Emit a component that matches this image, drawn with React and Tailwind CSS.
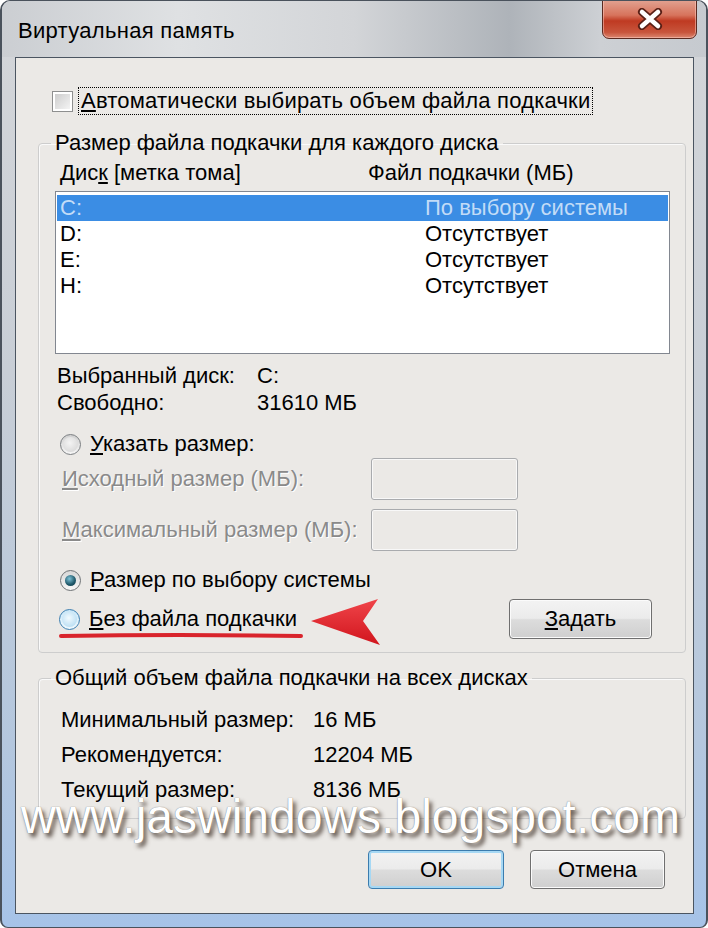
import React from 'react';

const font = "font-['Liberation_Sans',Arial,sans-serif]";

const Radio = ({ state }) => {
  if (state === 'checked') {
    return (
      <span className="w-[21px] h-[21px] rounded-full border border-[#6f7376] bg-[linear-gradient(to_bottom,#d8d8d8,#f7f7f7)] flex items-center justify-center shrink-0">
        <span className="w-[11px] h-[11px] rounded-full bg-[radial-gradient(circle_at_40%_35%,#7fc3d8,#1d5668_60%,#123b48)]" />
      </span>
    );
  }
  if (state === 'hover') {
    return (
      <span className="w-[21px] h-[21px] rounded-full border border-[#3c7fb1] bg-[linear-gradient(to_bottom,#c9e6f7,#eef8fd)] flex items-center justify-center shrink-0">
        <span className="w-[15px] h-[15px] rounded-full bg-[radial-gradient(circle_at_45%_40%,#f2fafe,#a9d6f0)]" />
      </span>
    );
  }
  return (
    <span className="w-[21px] h-[21px] rounded-full border border-[#7b7f82] bg-[linear-gradient(to_bottom,#cfcfcf,#f6f6f6)] flex items-center justify-center shrink-0">
      <span className="w-[15px] h-[15px] rounded-full bg-[radial-gradient(circle_at_45%_40%,#f4f4f4,#d2d2d2)]" />
    </span>
  );
};

const WinButton = ({ children, focused, className = '' }) => (
  <div
    className={`flex items-center justify-center rounded-[4px] border text-[22px] leading-none text-black bg-[linear-gradient(to_bottom,#f3f3f3_0%,#ebebeb_48%,#dcdcdc_52%,#cfcfcf_100%)] ${
      focused
        ? 'border-[#3b7cae] shadow-[inset_0_0_0_2px_#a6d8f4]'
        : 'border-[#6f6f6f] shadow-[inset_0_0_0_1px_#fbfbfb]'
    } ${className}`}
  >
    {children}
  </div>
);

const Disk = ({ name, value, selected }) => (
  <div
    className={`flex items-center h-[26px] text-[22px] leading-none ${
      selected ? 'bg-[#3b8de4] text-[#c2dcf7]' : 'text-black'
    }`}
  >
    <span className="w-[368px] pl-[3px]">{name}</span>
    <span>{value}</span>
  </div>
);

export default function App() {
  return (
    <div
      className={`relative w-[708px] h-[928px] overflow-hidden ${font} rounded-t-[10px] rounded-b-[8px] border-x-2 border-y border-[#4a525c] bg-[linear-gradient(to_bottom,#d4d6d9_0%,#c8ced6_40%,#b4c7de_80%,#a6c3e8_100%)]`}
    >
      {/* title bar */}
      <div className="flex h-[56px] pl-[16px] pr-[9px] bg-[linear-gradient(to_right,#cbced2_0%,#dfe1e3_25%,#d3d5d8_50%,#aeb3b9_72%,#cdd0d4_85%,#c6cacf_100%)]">
        <div className="flex-1 pt-[19px] text-[22px] leading-none tracking-[0.3px] text-black">Виртуальная память</div>
        <div className="-mt-[2px] w-[95px] h-[40px] rounded-b-[7px] border border-[#5b2a20] bg-[linear-gradient(to_bottom,#e2a392_0%,#d7735c_40%,#bf3a22_55%,#c8553c_85%,#dc8770_100%)] shadow-[inset_0_0_0_1px_rgba(255,210,200,0.5)] flex items-center justify-center">
          <svg width="28" height="22" viewBox="0 0 28 22">
            <path d="M6 4 L22 18 M22 4 L6 18" stroke="#5a2016" strokeWidth="8" strokeLinecap="round" />
            <path d="M6 4 L22 18 M22 4 L6 18" stroke="#ffffff" strokeWidth="4.5" strokeLinecap="round" />
          </svg>
        </div>
      </div>

      {/* client area */}
      <div className="ml-[13px] w-[679px] h-[857px] border border-[#4b5561] bg-[#ebe9e6] text-black">
        {/* auto checkbox */}
        <div className="mt-[29px] ml-[36px] flex items-center h-[28px]">
          <span className="w-[21px] h-[21px] border border-[#8e8f8f] bg-white p-[2px] shrink-0">
            <span className="block w-full h-full bg-[linear-gradient(135deg,#cdcdcd,#f4f4f4)]" />
          </span>
          <span className="ml-[5px] h-[28px] flex items-center px-[2px] border border-dotted border-black text-[22px] leading-none tracking-[0.2px]">
            <u className="underline-offset-2">А</u>втоматически выбирать объем файла подкачки
          </span>
        </div>

        {/* per-disk group */}
        <fieldset className="mt-[15px] ml-[22px] w-[648px] border border-[#cdcdcd] rounded-[4px] pb-[13px] shadow-[inset_1px_1px_0_#fafafa]">
          <legend className="ml-[12px] px-[4px] h-[26px] flex items-center text-[22px] leading-none">
            Размер файла подкачки для каждого диска
          </legend>
          <div className="mt-[5px] h-[24px] flex items-center text-[22px] leading-none">
            <span className="pl-[21px] w-[329px]">
              Дис<u className="underline-offset-2">к</u> [метка тома]
            </span>
            <span>Файл подкачки (МБ)</span>
          </div>
          <div className="mt-[6px] ml-[16px] w-[615px] h-[163px] border border-[#828790] bg-white pt-[3px] px-[1px]">
            <Disk name="C:" value="По выбору системы" selected />
            <Disk name="D:" value="Отсутствует" />
            <Disk name="E:" value="Отсутствует" />
            <Disk name="H:" value="Отсутствует" />
          </div>

          <div className="mt-[8px] pl-[18px] text-[22px] leading-none">
            <div className="h-[27px] flex items-center">
              <span className="w-[200px]">Выбранный диск:</span>
              <span>C:</span>
            </div>
            <div className="h-[27px] flex items-center">
              <span className="w-[200px]">Свободно:</span>
              <span>31610 МБ</span>
            </div>
          </div>

          <div className="mt-[15px] pl-[21px] h-[26px] flex items-center gap-[9px] text-[22px] leading-none">
            <Radio />
            <span>
              <u className="underline-offset-2">У</u>казать размер:
            </span>
          </div>

          <div className="mt-[1px] h-[42px] flex items-center text-[22px] leading-none">
            <span className="pl-[23px] w-[332px] text-[#8a8a8a] [text-shadow:1px_1px_0_#ffffff]">
              <u className="underline-offset-2">И</u>сходный размер (МБ):
            </span>
            <div className="w-[147px] h-[42px] rounded-[3px] border border-[#a9abae] bg-[#ebe9e6] shadow-[inset_0_0_0_1px_#f8f8f8]" />
          </div>
          <div className="mt-[9px] h-[42px] flex items-center text-[22px] leading-none">
            <span className="pl-[23px] w-[332px] text-[#8a8a8a] [text-shadow:1px_1px_0_#ffffff]">
              <u className="underline-offset-2">М</u>аксимальный размер (МБ):
            </span>
            <div className="w-[147px] h-[42px] rounded-[3px] border border-[#a9abae] bg-[#ebe9e6] shadow-[inset_0_0_0_1px_#f8f8f8]" />
          </div>

          <div className="mt-[16px] pl-[21px] h-[26px] flex items-center gap-[9px] text-[22px] leading-none">
            <Radio state="checked" />
            <span>
              <u className="underline-offset-2">Р</u>азмер по выбору системы
            </span>
          </div>

          <div className="mt-[6px] pl-[20px] pr-[33px] h-[40px] flex items-center justify-between text-[22px] leading-none">
            <div className="flex items-center gap-[9px]">
              <Radio state="hover" />
              <span>
                <u className="underline-offset-2">Б</u>ез файла подкачки
              </span>
            </div>
            <WinButton className="w-[143px] h-[40px]">
              <span>
                <u className="underline-offset-2">З</u>адать
              </span>
            </WinButton>
          </div>
        </fieldset>

        {/* totals group */}
        <fieldset className="mt-[12px] ml-[22px] w-[648px] border border-[#cdcdcd] rounded-[4px] pb-[11px] shadow-[inset_1px_1px_0_#fafafa]">
          <legend className="ml-[12px] px-[4px] h-[26px] flex items-center text-[22px] leading-none">
            Общий объем файла подкачки на всех дисках
          </legend>
          <div className="mt-[11px] pl-[22px] text-[22px] leading-none">
            <div className="h-[35px] flex items-center">
              <span className="w-[252px]">Минимальный размер:</span>
              <span>16 МБ</span>
            </div>
            <div className="h-[35px] flex items-center">
              <span className="w-[252px]">Рекомендуется:</span>
              <span>12204 МБ</span>
            </div>
            <div className="h-[35px] flex items-center">
              <span className="w-[252px]">Текущий размер:</span>
              <span>8136 МБ</span>
            </div>
          </div>
        </fieldset>

        <div className="mt-[31px] pr-[28px] flex justify-end gap-[26px]">
          <WinButton focused className="w-[136px] h-[39px]">OK</WinButton>
          <WinButton className="w-[135px] h-[39px]">Отмена</WinButton>
        </div>
      </div>

      {/* annotation: red underline and arrow */}
      <svg className="absolute left-[56px] top-[630px]" width="246" height="10" viewBox="0 0 246 10">
        <path d="M3 5 Q120 3 243 5" stroke="#d9242c" strokeWidth="4" strokeLinecap="round" fill="none" />
      </svg>
      <svg className="absolute left-[306px] top-[595px]" width="76" height="52" viewBox="0 0 76 52">
        <defs>
          <linearGradient id="ar" x1="0" y1="0" x2="0" y2="1">
            <stop offset="0" stopColor="#f0454a" />
            <stop offset="1" stopColor="#d1151d" />
          </linearGradient>
        </defs>
        <polygon points="3,25 70,3 55,25 72,49" fill="url(#ar)" />
      </svg>

      {/* watermark */}
      <div className="absolute left-[19px] top-[792px] text-[48px] leading-none text-white whitespace-nowrap [text-shadow:0_0_1px_#6b6258,3px_4px_4px_rgba(70,58,48,0.85)]">
        www.jaswindows.blogspot.com
      </div>
    </div>
  );
}
